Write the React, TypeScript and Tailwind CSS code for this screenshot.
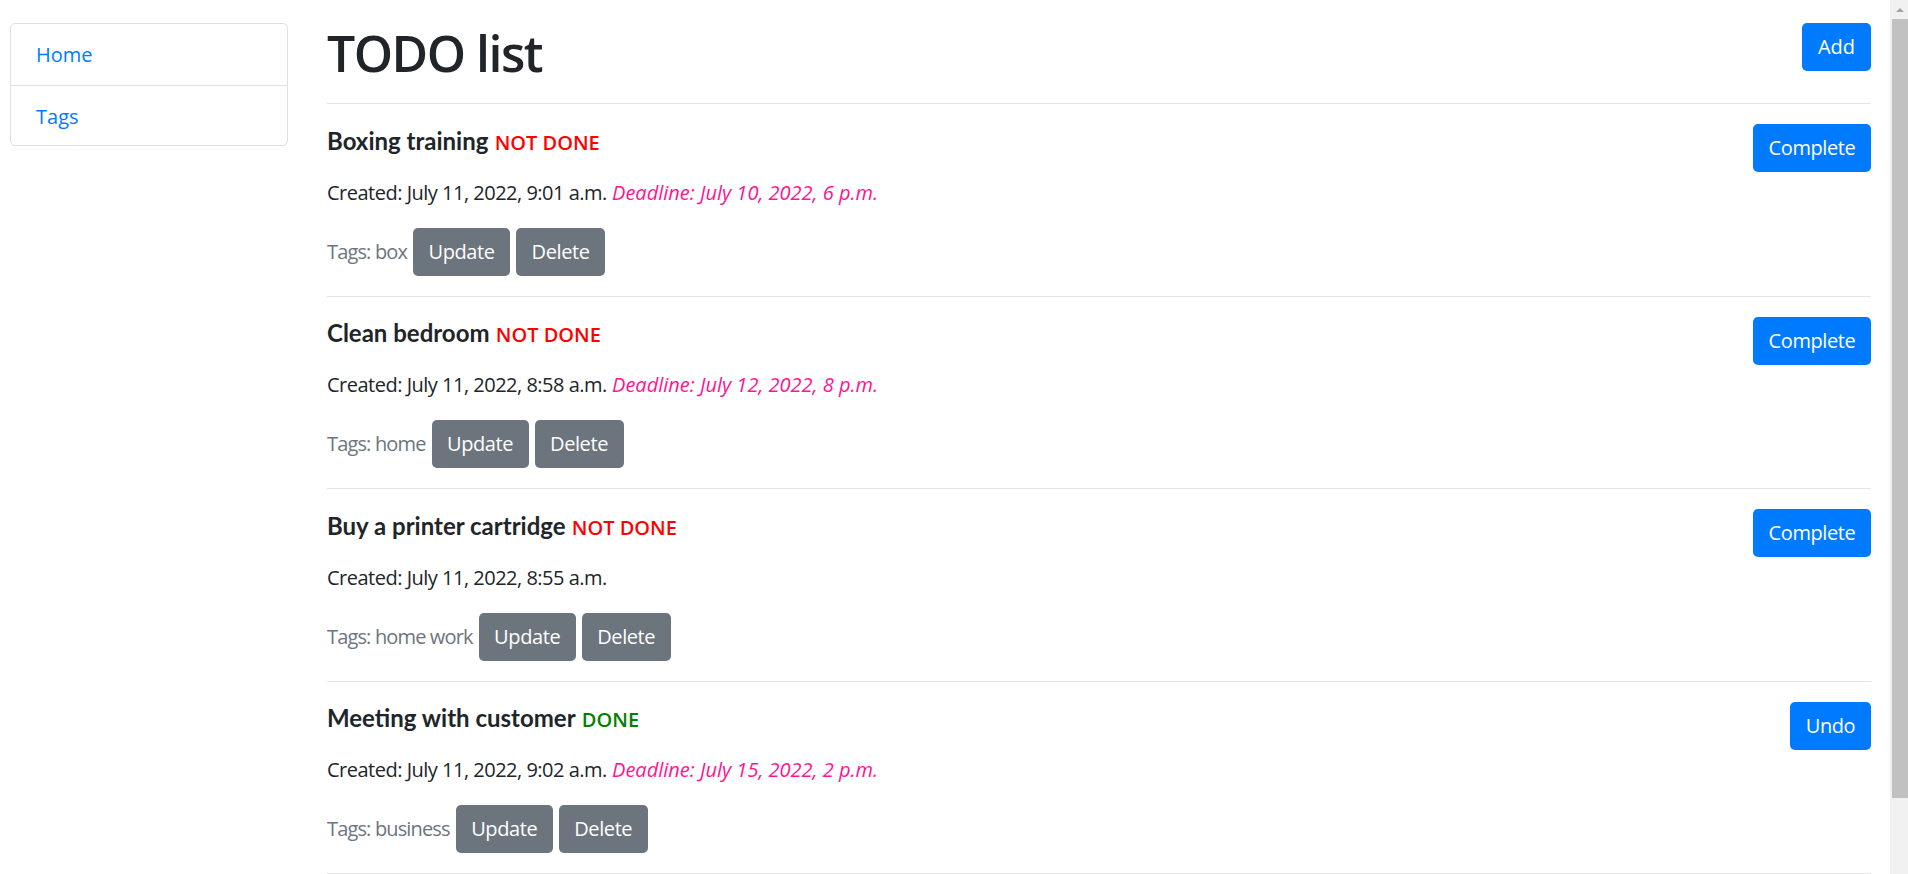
import React from 'react';

type Todo = {
  title: string;
  done: boolean;
  created: string;
  deadline?: string;
  tags: string;
};

const todos: Todo[] = [
  { title: "Boxing training", done: false, created: "July 11, 2022, 9:01 a.m.", deadline: "July 10, 2022, 6 p.m.", tags: "box" },
  { title: "Clean bedroom", done: false, created: "July 11, 2022, 8:58 a.m.", deadline: "July 12, 2022, 8 p.m.", tags: "home" },
  { title: "Buy a printer cartridge", done: false, created: "July 11, 2022, 8:55 a.m.", tags: "home work" },
  { title: "Meeting with customer", done: true, created: "July 11, 2022, 9:02 a.m.", deadline: "July 15, 2022, 2 p.m.", tags: "business" },
];

function TodoItem({ todo }: { todo: Todo }) {
  return (
    <div className="border-b border-[#e5e5e5] pt-[20px] pb-[20px]">
      <div className="flex h-[53.6px] items-start justify-between">
        <h5 className="mt-[1.5px] text-[24px] leading-[30px] font-bold text-[#212529]">
          <span className="font-['Lato',sans-serif]">{todo.title}</span>{' '}
          {todo.done ? (
            <span className="text-[20px] font-semibold text-[#008000]">DONE</span>
          ) : (
            <span className="text-[20px] font-semibold text-[#ff0000]">NOT DONE</span>
          )}
        </h5>
        <button
          className={`h-[48px] rounded-[5px] bg-[#007bff] text-[20px] leading-[30px] tracking-[-0.4px] text-white ${
            todo.done ? 'w-[81px]' : 'w-[118px]'
          }`}
        >
          {todo.done ? 'Undo' : 'Complete'}
        </button>
      </div>

      <p className="mb-[20px] text-[20px] leading-[30px] text-[#212529]">
        <span className="tracking-[-0.5px]">Created: {todo.created}</span>{' '}
        {todo.deadline && <em className="text-[#ff1493]">Deadline: {todo.deadline}</em>}
      </p>

      <div className="flex h-[48px] items-center gap-[5px] text-[20px] leading-[30px] tracking-[-0.4px]">
        <span className="text-[#6c757d] tracking-[-0.85px]">Tags: {todo.tags}</span>
        <button className="ml-[1px] h-[48px] w-[97px] rounded-[5px] bg-[#6c757d] text-white">Update</button>
        <button className="ml-[1px] h-[48px] w-[89px] rounded-[5px] bg-[#6c757d] text-white">Delete</button>
      </div>
    </div>
  );
}

export default function App() {
  return (
    <div className="flex h-[874px] overflow-hidden bg-white font-['Open_Sans',sans-serif]">
      <div className="flex flex-1">
        {/* sidebar */}
        <div className="w-[288px] shrink-0 pl-[10px] pt-[23px]">
          <div className="rounded-[5px] border border-[#dfdfdf] text-[20px] leading-[30px] text-[#007bff]">
            <div className="border-b border-[#dfdfdf] px-[25px] pt-[16px] pb-[15px]">Home</div>
            <div className="px-[25px] pt-[16px] pb-[13px]">Tags</div>
          </div>
        </div>

        {/* main */}
        <div className="ml-[39px] flex-1 pr-[19px] pt-[23px]">
          <div className="flex items-start justify-between border-b border-[#e5e5e5] pb-[20px]">
            <h1 className="text-[50px] leading-[60px] font-semibold tracking-[-1.5px] text-[#212529]">TODO list</h1>
            <button className="h-[48px] w-[69px] rounded-[5px] bg-[#007bff] text-[20px] leading-[30px] text-white">
              Add
            </button>
          </div>
          {todos.map((t, i) => (
            <TodoItem key={i} todo={t} />
          ))}
        </div>
      </div>

      {/* browser scrollbar */}
      <div className="flex w-[18px] shrink-0 flex-col bg-[#f1f1f1]">
        <div className="flex h-[19px] items-center justify-center pl-[2px]">
          <div className="h-0 w-0 border-x-[4px] border-b-[4px] border-x-transparent border-b-[#a3a3a3]" />
        </div>
        <div className="ml-[2px] h-[779px] bg-[#c1c1c1]" />
      </div>
    </div>
  );
}
